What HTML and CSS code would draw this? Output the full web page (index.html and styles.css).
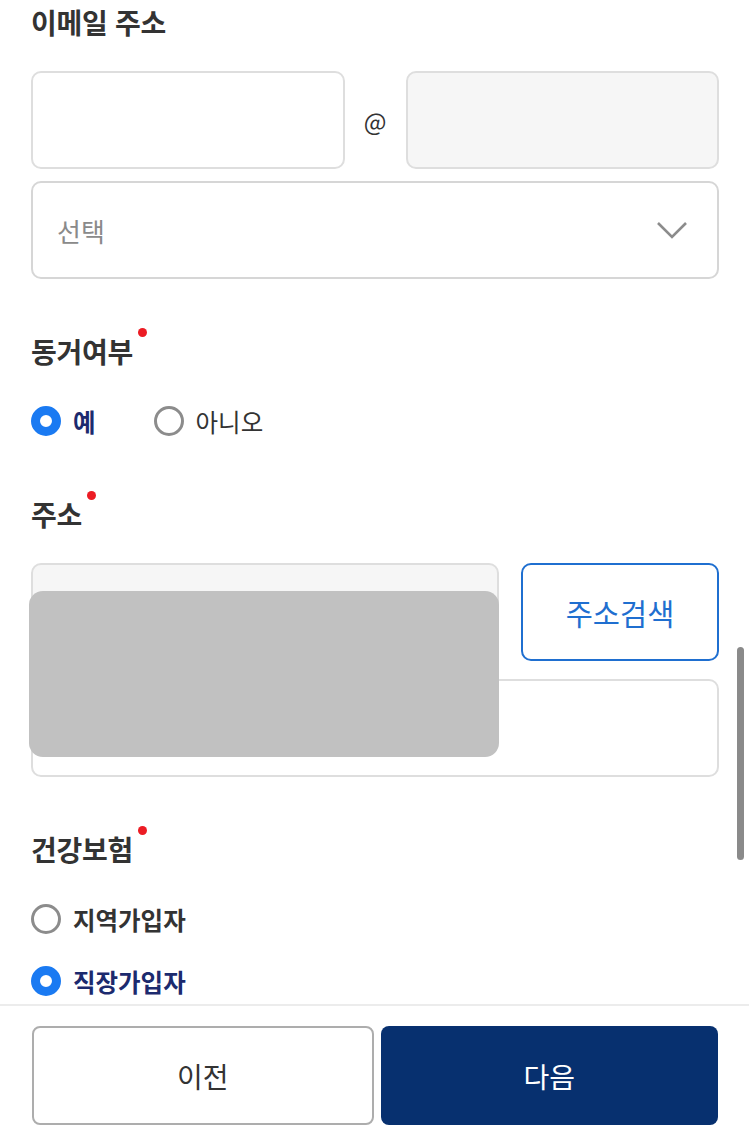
FILE: index.html
```html
<!DOCTYPE html>
<html lang="ko">
<head>
    <meta charset="UTF-8">
    <title>가입 정보 입력</title>
    <link rel="stylesheet" href="styles.css">
</head>
<body>
    <main class="form">
        <section class="field">
            <h2 class="field-label">이메일 주소</h2>
            <div class="email-row">
                <div class="input"></div>
                <span class="at">@</span>
                <div class="input input-disabled"></div>
            </div>
            <div class="select">
                <span class="placeholder">선택</span>
                <svg class="chevron" width="32" height="18" viewBox="0 0 32 18">
                    <polyline points="2,2 16,16 30,2" fill="none" stroke="#8c8c8c" stroke-width="2.6"/>
                </svg>
            </div>
        </section>

        <section class="field">
            <h2 class="field-label required">동거여부</h2>
            <div class="radio-group">
                <label class="radio checked"><span class="radio-mark"></span>예</label>
                <label class="radio"><span class="radio-mark"></span>아니오</label>
            </div>
        </section>

        <section class="field">
            <h2 class="field-label required">주소</h2>
            <div class="address">
                <div class="address-row">
                    <div class="input input-disabled"></div>
                    <button class="search-btn">주소검색</button>
                </div>
                <div class="input"></div>
                <div class="masked"></div>
            </div>
        </section>

        <section class="field">
            <h2 class="field-label required">건강보험</h2>
            <div class="radio-list">
                <label class="radio strong"><span class="radio-mark"></span>지역가입자</label>
                <label class="radio checked"><span class="radio-mark"></span>직장가입자</label>
            </div>
        </section>
    </main>

    <div class="scrollbar"></div>

    <footer class="bottom-bar">
        <button class="btn btn-prev">이전</button>
        <button class="btn btn-next">다음</button>
    </footer>
</body>
</html>
```

FILE: styles.css
```css
* {
    box-sizing: border-box;
}

body {
    margin: 0;
    background: #fff;
    font-family: "Noto Sans CJK KR", "Noto Sans", sans-serif;
    color: #333;
}

.form {
    padding: 4px 30px 160px 31px;
}

.field + .field {
    margin-top: 54px;
}

.field-label {
    display: inline-block;
    position: relative;
    margin: 0 0 31px;
    font-size: 28px;
    line-height: 36px;
    font-weight: 700;
    color: #333;
    letter-spacing: -0.3px;
}

.required::after {
    content: "";
    position: absolute;
    top: -5px;
    right: -14px;
    width: 9px;
    height: 9px;
    border-radius: 50%;
    background: #ec1c24;
}

.input {
    height: 98px;
    border: 2px solid #dedede;
    border-radius: 10px;
    background: #fff;
}

.input-disabled {
    background: #f6f6f6;
}

.email-row {
    display: flex;
    align-items: center;
}

.email-row .input {
    flex: 1;
}

.at {
    width: 61px;
    text-align: center;
    font-size: 24px;
    color: #333;
}

.select {
    margin-top: 12px;
    height: 98px;
    border: 2px solid #d6d6d6;
    border-radius: 10px;
    display: flex;
    align-items: center;
    justify-content: space-between;
    padding: 0 29px 0 24px;
}

.placeholder {
    font-size: 26px;
    color: #8a8a8a;
}

.radio-group {
    display: flex;
    gap: 58px;
}

.radio-list {
    display: flex;
    flex-direction: column;
    gap: 20px;
}

.radio {
    display: flex;
    align-items: center;
    gap: 12px;
    height: 42px;
    font-size: 24.5px;
    color: #333;
}

.radio.strong {
    font-weight: 700;
}

.radio.checked {
    font-weight: 700;
    color: #1c2a6e;
}

.radio-mark {
    width: 30px;
    height: 30px;
    border-radius: 50%;
    border: 3px solid #8c8c8c;
    background: #fff;
}

.checked .radio-mark {
    border: 9px solid #1a7af2;
}

.address {
    position: relative;
    display: flex;
    flex-direction: column;
    gap: 18px;
}

.address-row {
    display: flex;
    gap: 22px;
}

.address-row .input {
    flex: 1;
}

.search-btn {
    width: 198px;
    height: 98px;
    border: 2px solid #1f6fd0;
    border-radius: 10px;
    background: #fff;
    color: #1f6fd0;
    font-family: inherit;
    font-size: 29.5px;
}

.masked {
    position: absolute;
    left: -2px;
    top: 28px;
    width: 470px;
    height: 166px;
    border-radius: 14px;
    background: #c1c1c1;
}

.scrollbar {
    position: fixed;
    top: 647px;
    right: 5px;
    width: 7px;
    height: 213px;
    border-radius: 4px;
    background: #8a8a8a;
}

.bottom-bar {
    position: fixed;
    left: 0;
    right: 0;
    bottom: 0;
    height: 138px;
    background: #fff;
    border-top: 2px solid #ececec;
    display: flex;
    gap: 7px;
    padding: 20px 31px 0 32px;
}

.btn {
    flex: 1 1 0;
    min-width: 0;
    height: 99px;
    border-radius: 8px;
    font-family: inherit;
    font-size: 28px;
}

.btn-prev {
    background: #fff;
    border: 2px solid #adadad;
    color: #333;
}

.btn-next {
    background: #07306f;
    border: none;
    color: #fff;
}
```
